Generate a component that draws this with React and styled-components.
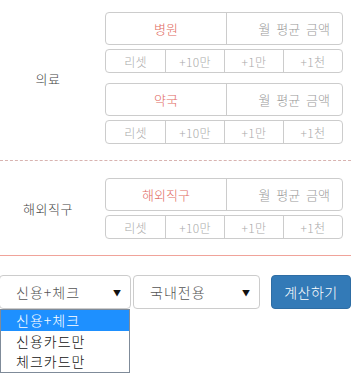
import React from 'react';
import styled, { createGlobalStyle } from 'styled-components';

const Global = createGlobalStyle`
    body {
        margin: 0;
        background: #fff;
        font-family: "Noto Sans CJK KR", "Noto Sans", sans-serif;
        font-weight: 300;
    }
`;

const Page = styled.div`
    width: 351px;
    height: 388px;
    overflow: hidden;
`;

const Section = styled.div`
    display: flex;
    align-items: center;
    padding: ${ (p) => p.pad };
    border-bottom: 1px ${ (p) => p.line } ${ (p) => p.color };
`;

const Label = styled.div`
    width: 96px;
    margin-right: 9px;
    text-align: center;
    font-size: 13px;
    letter-spacing: 0.5px;
    color: #444;
`;

const Fields = styled.div`
    width: 238px;
    display: flex;
    flex-direction: column;
`;

const Group = styled.div`
    display: flex;
    height: 33px;
    border: 1px solid #ccc;
    border-radius: 4px;
    box-sizing: border-box;
    margin-top: ${ (p) => p.top || 0 }px;
`;

const Name = styled.div`
    width: 120px;
    border-right: 1px solid #ccc;
    display: flex;
    align-items: center;
    justify-content: center;
    font-size: 13px;
    color: #df6a62;
`;

const Amount = styled.div`
    flex: 1;
    display: flex;
    align-items: center;
    justify-content: flex-end;
    padding-right: 12px;
    font-size: 13px;
    color: #999;
    word-spacing: 3px;
`;

const Buttons = styled.div`
    display: grid;
    grid-template-columns: repeat(4, 1fr);
    height: 24px;
    margin-top: 4px;
    border: 1px solid #ccc;
    border-radius: 4px;
    box-sizing: border-box;
`;

const Step = styled.div`
    display: flex;
    align-items: center;
    justify-content: center;
    font-size: 12px;
    letter-spacing: 0.3px;
    color: #aaa;
    & + & {
        border-left: 1px solid #ccc;
    }
`;

const Controls = styled.div`
    display: flex;
    align-items: center;
    margin-top: 19px;
    margin-left: -1px;
`;

const SelectBox = styled.div`
    position: relative;
    width: ${ (p) => p.w }px;
    height: 34px;
    box-sizing: border-box;
    border: 1px solid #ccc;
    border-radius: 4px;
    display: flex;
    align-items: center;
    justify-content: space-between;
    padding: 0 8px 0 16px;
    font-size: 14px;
    letter-spacing: 1px;
    color: #555;
    margin-right: ${ (p) => p.gap }px;
`;

const Arrow = styled.span`
    font-size: 8px;
    color: #111;
`;

const Options = styled.ul`
    position: absolute;
    top: 33px;
    left: 0;
    width: 130px;
    margin: 0;
    padding: 0;
    list-style: none;
    background: #fff;
    border: 1px solid #7f8b99;
    box-sizing: border-box;
    z-index: 2;
`;

const Option = styled.li`
    height: 20.5px;
    line-height: 20.5px;
    padding-left: 15px;
    font-size: 14px;
    letter-spacing: 1px;
    color: ${ (p) => p.active ? '#fff' : '#111' };
    background: ${ (p) => p.active ? '#1e90ff' : 'transparent' };
`;

const Calc = styled.button`
    width: 80px;
    height: 34px;
    border: 1px solid #2e6da4;
    border-radius: 4px;
    background: #337ab7;
    color: #fff;
    font-family: inherit;
    font-weight: 300;
    font-size: 14px;
    letter-spacing: 0.5px;
    padding: 0;
`;

const steps = [ '리셋', '+10만', '+1만', '+1천' ];

const Item = ({ name, top }) => (
    <>
        <Group top={ top }>
            <Name>{ name }</Name>
            <Amount>월 평균 금액</Amount>
        </Group>
        <Buttons>
            { steps.map((s) => <Step key={ s }>{ s }</Step>) }
        </Buttons>
    </>
);

export default function App() {
    return (
        <Page>
            <Global/>
            <Section pad="12px 0 16px" line="dashed" color="#d8b3b0">
                <Label>의료</Label>
                <Fields>
                    <Item name="병원"/>
                    <Item name="약국" top={ 10 }/>
                </Fields>
            </Section>
            <Section pad="17px 0 16px" line="solid" color="#f0a39a">
                <Label>해외직구</Label>
                <Fields>
                    <Item name="해외직구"/>
                </Fields>
            </Section>
            <Controls>
                <SelectBox w={ 132 } gap={ 2 }>
                    <span>신용+체크</span>
                    <Arrow>▼</Arrow>
                    <Options>
                        <Option active>신용+체크</Option>
                        <Option>신용카드만</Option>
                        <Option>체크카드만</Option>
                    </Options>
                </SelectBox>
                <SelectBox w={ 127 } gap={ 11 }>
                    <span>국내전용</span>
                    <Arrow>▼</Arrow>
                </SelectBox>
                <Calc>계산하기</Calc>
            </Controls>
        </Page>
    );
}
